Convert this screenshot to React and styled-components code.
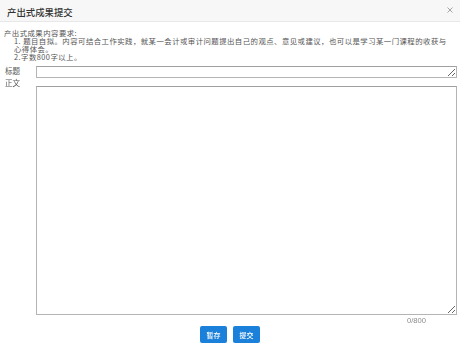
import React from "react";
import styled, { createGlobalStyle } from "styled-components";

const GlobalStyle = createGlobalStyle`
  html, body {
    margin: 0;
    padding: 0;
    background: #ffffff;
    font-family: "Noto Sans CJK SC", "Noto Sans", sans-serif;
    color: #444;
  }
`;

const Dialog = styled.div`
  width: 460px;
  height: 349px;
  display: flex;
  flex-direction: column;
  background: #fff;
  overflow: hidden;
`;

const Header = styled.div`
  height: 21px;
  display: flex;
  align-items: center;
  justify-content: space-between;
  padding: 0 5px 0 7px;
  background: #f7f7f7;
  border-bottom: 1px solid #e8e8e8;
`;

const Title = styled.div`
  font-size: 9.4px;
  font-weight: 500;
  color: #333;
  padding-top: 3px;
`;

const Close = styled.button`
  border: 0;
  background: none;
  padding: 0;
  margin-bottom: 2px;
  width: 10px;
  height: 10px;
  display: flex;
  align-items: center;
  justify-content: center;
  cursor: pointer;
`;

const Body = styled.div`
  padding: 7px 3px 0 4px;
  display: flex;
  flex-direction: column;
`;

const Notice = styled.div`
  font-size: 7.4px;
  line-height: 8px;
  letter-spacing: 0.45px;
  color: #555;
  margin-bottom: 5px;
  padding-right: 10px;
`;

const NoticeItem = styled.div`
  padding-left: 10px;
`;

const Row = styled.div`
  display: grid;
  grid-template-columns: 32px 421px;
  align-items: start;
`;

const Label = styled.div`
  font-size: 7.6px;
  line-height: 8px;
  color: #555;
  padding: ${(p) => p.$pad || "0"};
  padding-left: 1px;
`;

const Field = styled.textarea`
  box-sizing: border-box;
  width: 421px;
  height: ${(p) => p.$h}px;
  margin-top: ${(p) => p.$mt || 0}px;
  border: 1px solid #b4b4b4;
  border-top-color: #a0a0a0;
  border-radius: 0;
  padding: 1px 3px;
  font-family: inherit;
  font-size: 8px;
  line-height: 9px;
  outline: none;
  display: block;
`;

const Counter = styled.div`
  align-self: flex-end;
  margin-right: 31px;
  margin-top: 2px;
  font-size: 7.6px;
  line-height: 8px;
  color: #8a8a8a;
  font-family: "Liberation Sans", Arial, sans-serif;
`;

const Actions = styled.div`
  display: flex;
  justify-content: center;
  gap: 6px;
  margin-top: 1px;
  margin-left: -4px;
  padding-left: 3px;
`;

const Button = styled.button`
  width: 27px;
  height: 17px;
  padding: 0;
  border: 0;
  border-radius: 2px;
  background: #1a80d9;
  color: #fff;
  font-family: inherit;
  font-size: 7px;
  font-weight: 500;
  cursor: pointer;
`;

export default function App() {
  return (
    <>
      <GlobalStyle />
      <Dialog>
        <Header>
          <Title>产出式成果提交</Title>
          <Close aria-label="关闭">
            <svg width="6" height="6" viewBox="0 0 6 6">
              <path d="M0.5 0.5L5.5 5.5M5.5 0.5L0.5 5.5" stroke="#9a9a9a" strokeWidth="0.9" />
            </svg>
          </Close>
        </Header>
        <Body>
          <Notice>
            产出式成果内容要求:
            <NoticeItem>
              1. 题目自拟。内容可结合工作实践，就某一会计或审计问题提出自己的观点、意见或建议，也可以是学习某一门课程的收获与心得体会。
            </NoticeItem>
            <NoticeItem>2.字数800字以上。</NoticeItem>
          </Notice>
          <Row>
            <Label $pad="1px 0 0">标题</Label>
            <Field $h={12} rows={1} />
          </Row>
          <Row>
            <Label $pad="1px 0 0">正文</Label>
            <Field $h={229} $mt={8} />
          </Row>
          <Counter>0/800</Counter>
          <Actions>
            <Button>暂存</Button>
            <Button>提交</Button>
          </Actions>
        </Body>
      </Dialog>
    </>
  );
}
